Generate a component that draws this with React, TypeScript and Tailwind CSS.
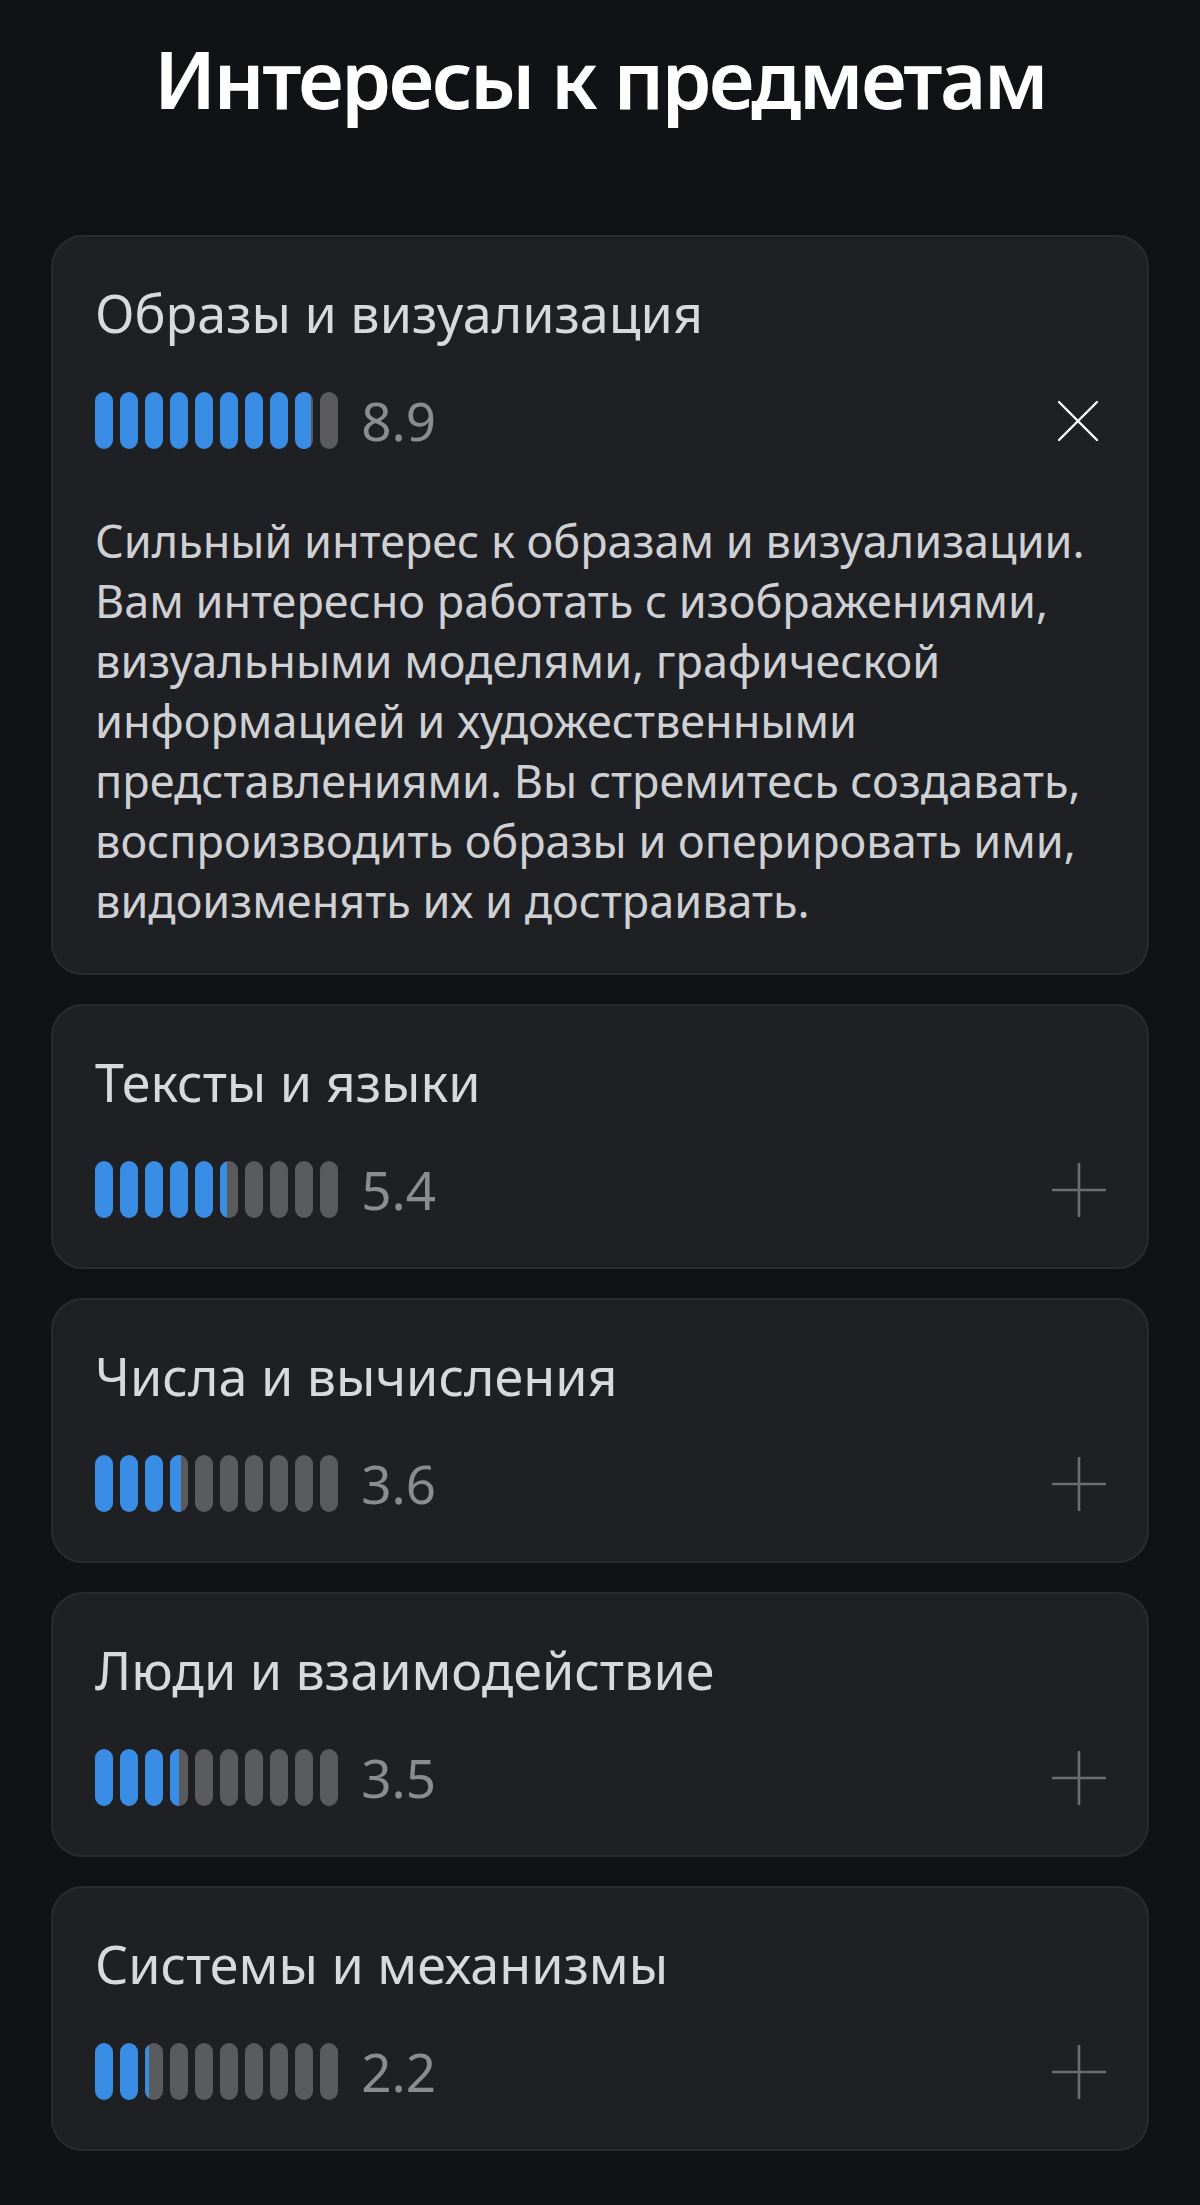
import React from "react";

type Item = { title: string; value: number; open?: boolean; text?: string[] };

const items: Item[] = [
  {
    title: "Образы и визуализация",
    value: 8.9,
    open: true,
    text: [
      "Сильный интерес к образам и визуализации.",
      "Вам интересно работать с изображениями,",
      "визуальными моделями, графической",
      "информацией и художественными",
      "представлениями. Вы стремитесь создавать,",
      "воспроизводить образы и оперировать ими,",
      "видоизменять их и достраивать.",
    ],
  },
  { title: "Тексты и языки", value: 5.4 },
  { title: "Числа и вычисления", value: 3.6 },
  { title: "Люди и взаимодействие", value: 3.5 },
  { title: "Системы и механизмы", value: 2.2 },
];

function Bars({ value }: { value: number }) {
  return (
    <div className="flex gap-[6.6px]">
      {Array.from({ length: 10 }).map((_, i) => {
        const f = Math.max(0, Math.min(1, value - i));
        return (
          <div
            key={i}
            className="h-[57px] w-[18.4px] overflow-hidden rounded-full bg-[#5a5b5f]"
          >
            <div className="h-full bg-[#3a8de5]" style={{ width: `${f * 100}%` }} />
          </div>
        );
      })}
    </div>
  );
}

function CloseIcon() {
  return (
    <svg width="40" height="40" viewBox="0 0 40 40" fill="none">
      <path d="M1 1L39 39M39 1L1 39" stroke="#ffffff" strokeWidth="2.4" strokeLinecap="round" />
    </svg>
  );
}

function PlusIcon() {
  return (
    <svg width="54" height="54" viewBox="0 0 54 54" fill="none">
      <path d="M27 1V53M1 27H53" stroke="#6c6d71" strokeWidth="2.6" strokeLinecap="round" />
    </svg>
  );
}

function Card({ item }: { item: Item }) {
  return (
    <div
      className={`rounded-[32px] border-2 border-[#2a2b30] bg-[#1f2024] pl-[42px] pr-[41px] pt-[44px] ${
        item.open ? "pb-[42px]" : "pb-[49px]"
      }`}
    >
      <div className="text-[52px] leading-[64px] text-[#d8d9db]">{item.title}</div>
      <div className="mt-[47px] flex h-[57px] items-center">
        <Bars value={item.value} />
        <div className="ml-[23px] text-[53px] leading-[57px] text-[#8b8c90]">
          {item.value.toFixed(1)}
        </div>
        <div className="ml-auto flex h-[54px] w-[54px] items-center justify-center">
          {item.open ? (
            <div className="mr-[3px] flex">
              <CloseIcon />
            </div>
          ) : (
            <PlusIcon />
          )}
        </div>
      </div>
      {item.open && item.text && (
        <div className="mt-[62px] whitespace-nowrap text-[45px] leading-[60px] text-[#cfd0d3]">
          {item.text.map((t, i) => (
            <div key={i}>{t}</div>
          ))}
        </div>
      )}
    </div>
  );
}

export default function App() {
  return (
    <div
      className="min-h-screen bg-[#111216] px-[51px] pt-[30px] pb-[55px]"
      style={{ fontFamily: '"Noto Sans", "Open Sans", sans-serif' }}
    >
      <h1 className="text-center text-[80px] font-semibold leading-[96px] tracking-[-2.6px] text-white">
        Интересы к предметам
      </h1>
      <div className="mt-[109px] flex flex-col gap-[29px]">
        {items.map((it) => (
          <Card key={it.title} item={it} />
        ))}
      </div>
    </div>
  );
}
